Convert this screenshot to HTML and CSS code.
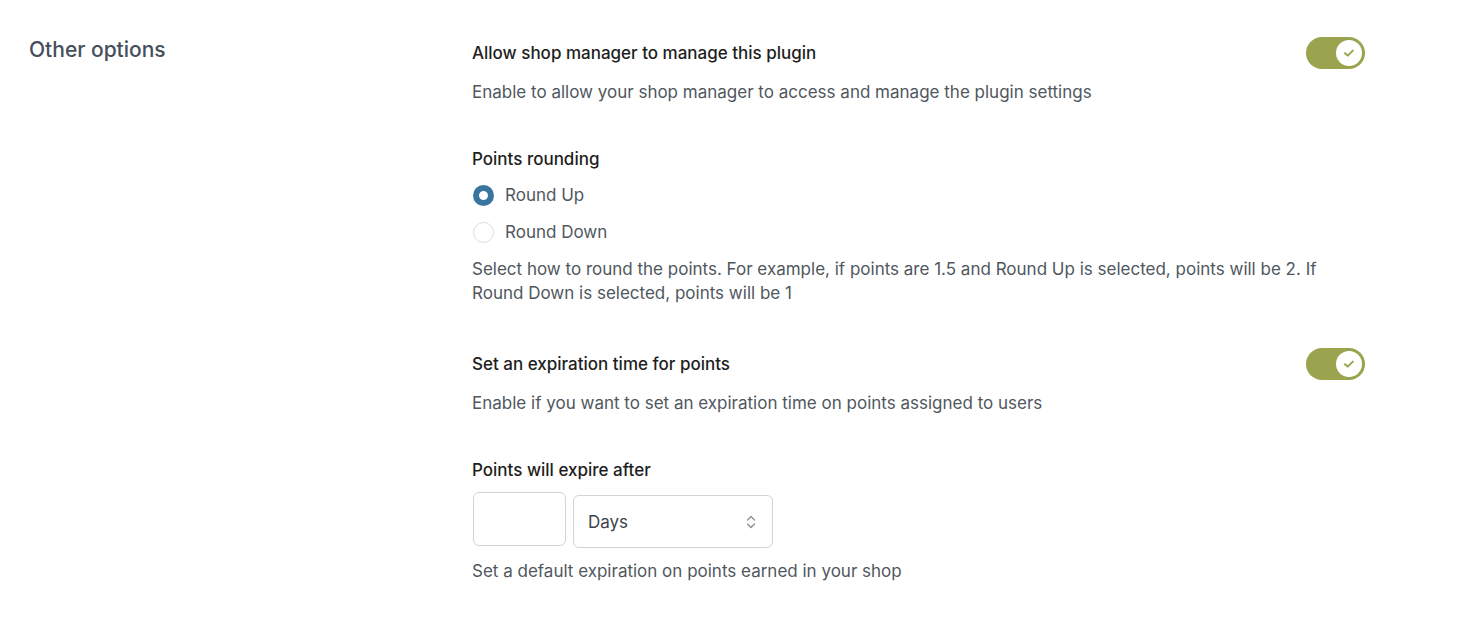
FILE: index.html
```
<!DOCTYPE html>
<html lang="en">
<head>
<meta charset="utf-8">
<title>Other options</title>
<link rel="stylesheet" href="styles.css">
</head>
<body>
<div class="page">
  <h2 class="section-title">Other options</h2>
  <div class="fields">
    <div class="field">
      <div class="field-head">
        <span class="label">Allow shop manager to manage this plugin</span>
        <span class="toggle">
          <span class="knob">
            <svg width="12" height="10" viewBox="0 0 12 10"><path d="M2 5.2 L4.7 7.6 L9.8 2.6" fill="none" stroke="#9aa34d" stroke-width="2" stroke-linecap="round" stroke-linejoin="round"/></svg>
          </span>
        </span>
      </div>
      <p class="desc">Enable to allow your shop manager to access and manage the plugin settings</p>
    </div>

    <div class="field">
      <div class="label plain">Points rounding</div>
      <div class="radios">
        <label class="radio"><span class="dot on"></span>Round Up</label>
        <label class="radio"><span class="dot"></span>Round Down</label>
      </div>
      <p class="desc">Select how to round the points. For example, if points are 1.5 and Round Up is selected, points will be 2. If Round Down is selected, points will be 1</p>
    </div>

    <div class="field">
      <div class="field-head">
        <span class="label">Set an expiration time for points</span>
        <span class="toggle">
          <span class="knob">
            <svg width="12" height="10" viewBox="0 0 12 10"><path d="M2 5.2 L4.7 7.6 L9.8 2.6" fill="none" stroke="#9aa34d" stroke-width="2" stroke-linecap="round" stroke-linejoin="round"/></svg>
          </span>
        </span>
      </div>
      <p class="desc">Enable if you want to set an expiration time on points assigned to users</p>
    </div>

    <div class="field">
      <div class="label plain">Points will expire after</div>
      <div class="inputs">
        <span class="num"></span>
        <span class="select">Days
          <svg class="chev" width="12" height="16" viewBox="0 0 12 16"><path d="M2.5 6 L6 2.5 L9.5 6 M2.5 10 L6 13.5 L9.5 10" fill="none" stroke="#8a8f94" stroke-width="1.3" stroke-linecap="round" stroke-linejoin="round"/></svg>
        </span>
      </div>
      <p class="desc">Set a default expiration on points earned in your shop</p>
    </div>
  </div>
</div>
</body>
</html>
```
FILE: styles.css
```
* { box-sizing: border-box; }
html, body { margin: 0; padding: 0; background: #fff; }
body {
  font-family: Inter, "Noto Sans", "Liberation Sans", sans-serif;
  color: #1e1e1e;
  -webkit-font-smoothing: antialiased;
}
.page {
  display: grid;
  grid-template-columns: 443px 893px;
  padding: 37px 0 0 29px;
}
.section-title {
  margin: 1px 0 0;
  font-size: 21px;
  line-height: 24px;
  font-weight: 500;
  color: #454f5b;
}
.fields {
  display: flex;
  flex-direction: column;
  gap: 43px;
}
.field-head {
  display: flex;
  align-items: center;
  justify-content: space-between;
  height: 32px;
}
.label {
  font-size: 17px;
  line-height: 24px;
  font-weight: 500;
  color: #1e1e1e;
}
.desc {
  margin: 11px 0 0;
  font-size: 17px;
  line-height: 24px;
  color: #50575e;
}
.toggle {
  width: 59px;
  height: 32px;
  border-radius: 16px;
  background: #9aa34d;
  display: flex;
  align-items: center;
  justify-content: flex-end;
  padding-right: 3px;
}
.knob {
  width: 26px;
  height: 26px;
  border-radius: 50%;
  background: #fff;
  display: flex;
  align-items: center;
  justify-content: center;
}
.radios {
  display: flex;
  flex-direction: column;
  gap: 13px;
  margin-top: 12px;
}
.radio {
  display: flex;
  align-items: center;
  gap: 11px;
  font-size: 17px;
  line-height: 24px;
  color: #50575e;
  padding-left: 1px;
}
.dot {
  width: 21px;
  height: 21px;
  border-radius: 50%;
  border: 1px solid #dcdcde;
  background: #fff;
}
.dot.on {
  border: 6px solid #39769f;
  background: #fff;
}
.radios + .desc { margin-top: 13px; }
.inputs {
  display: flex;
  gap: 7px;
  margin-top: 10px;
  padding-left: 1px;
}
.num {
  width: 93px;
  height: 54px;
  border: 1px solid #d4d4d8;
  border-radius: 6px;
  background: #fff;
}
.select {
  margin-top: 3px;
  width: 200px;
  height: 53px;
  border: 1px solid #d4d4d8;
  border-radius: 6px;
  display: flex;
  align-items: center;
  justify-content: space-between;
  padding: 0 15px 0 14px;
  font-size: 17px;
  color: #3c434a;
}
.chev { display: block; }
.inputs + .desc { margin-top: 11px; }
```
